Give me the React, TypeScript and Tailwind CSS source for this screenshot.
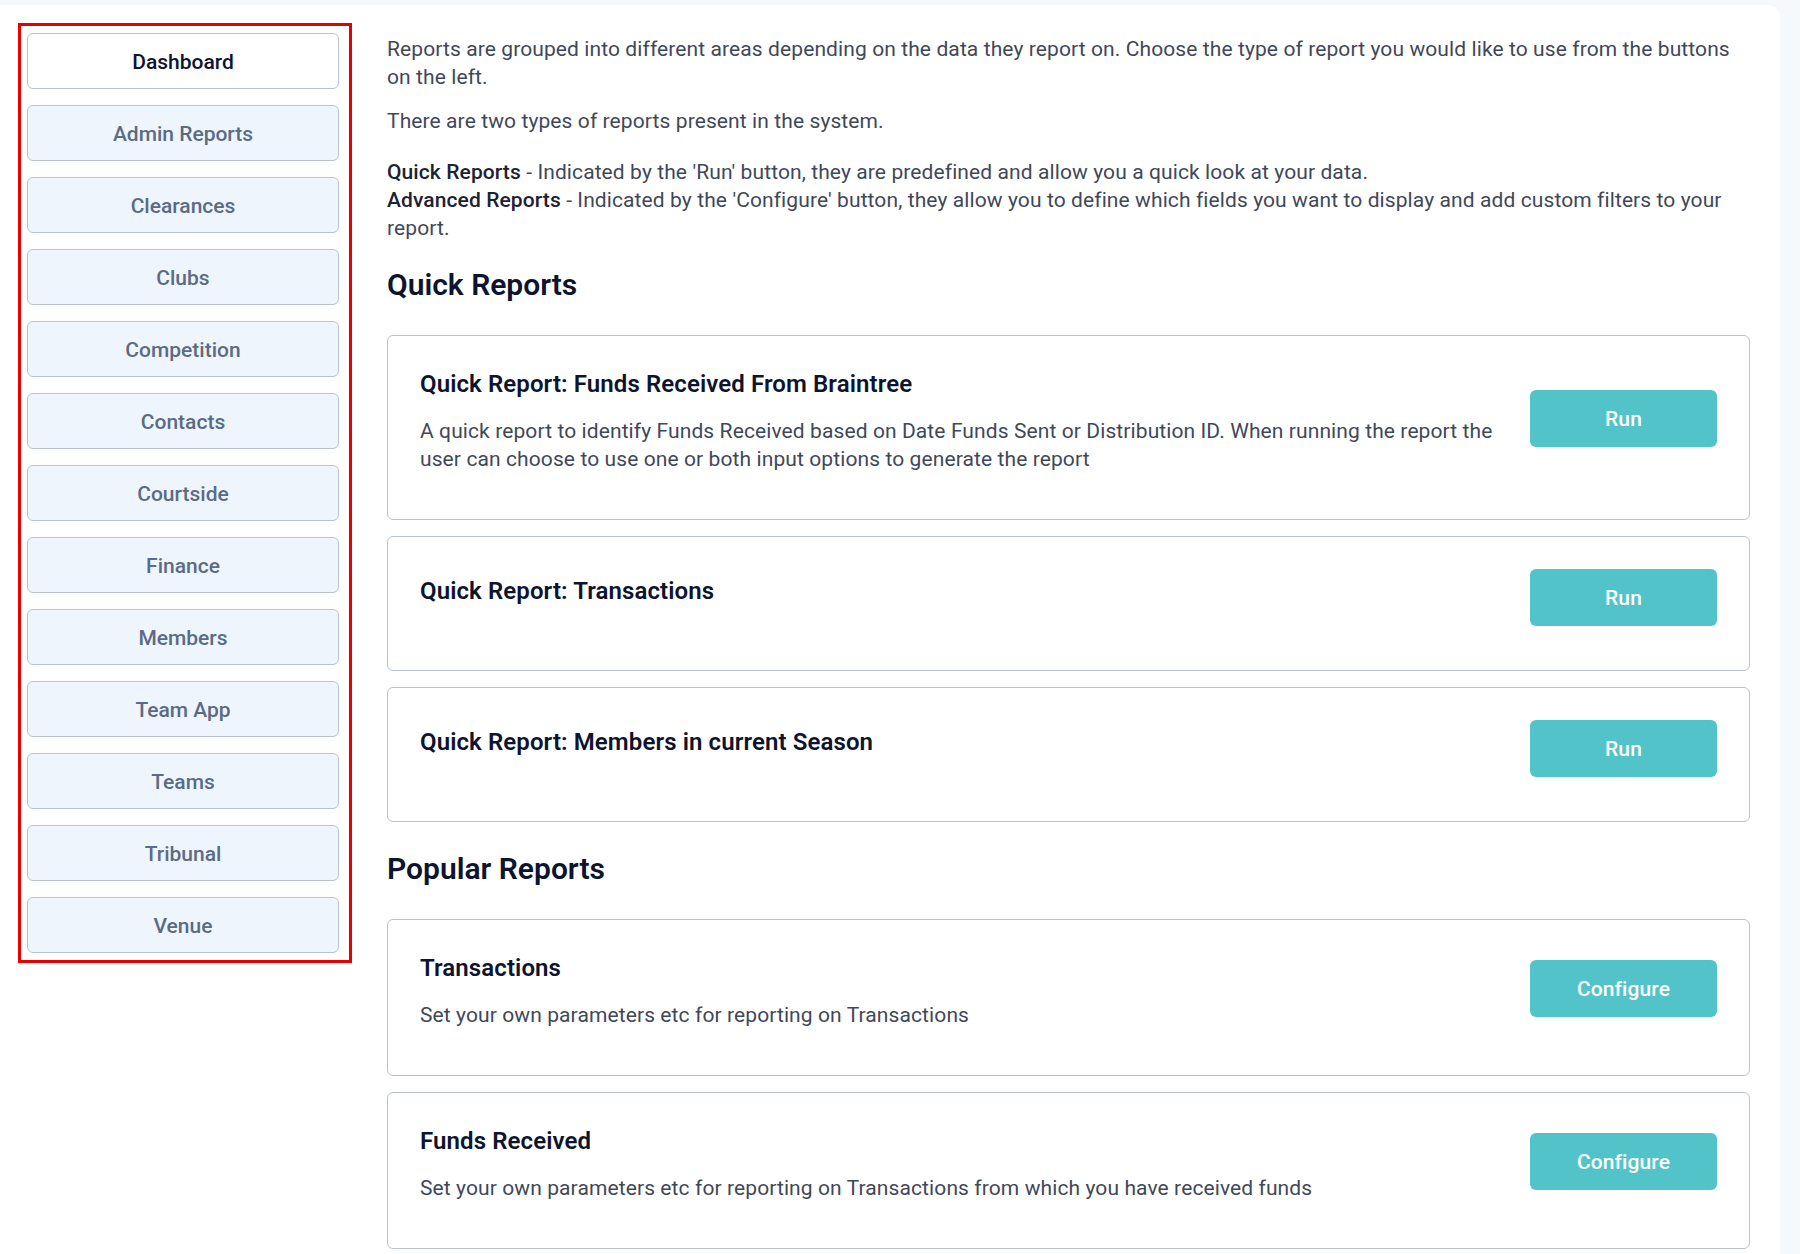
import React from "react";

const navItems = [
  "Dashboard",
  "Admin Reports",
  "Clearances",
  "Clubs",
  "Competition",
  "Contacts",
  "Courtside",
  "Finance",
  "Members",
  "Team App",
  "Teams",
  "Tribunal",
  "Venue",
];

type Report = { title: string; desc?: string; action: string };

const quickReports: Report[] = [
  {
    title: "Quick Report: Funds Received From Braintree",
    desc: "A quick report to identify Funds Received based on Date Funds Sent or Distribution ID. When running the report the user can choose to use one or both input options to generate the report",
    action: "Run",
  },
  { title: "Quick Report: Transactions", action: "Run" },
  { title: "Quick Report: Members in current Season", action: "Run" },
];

const popularReports: Report[] = [
  {
    title: "Transactions",
    desc: "Set your own parameters etc for reporting on Transactions",
    action: "Configure",
  },
  {
    title: "Funds Received",
    desc: "Set your own parameters etc for reporting on Transactions from which you have received funds",
    action: "Configure",
  },
];

function ReportCard({ r }: { r: Report }) {
  return (
    <div className="flex items-start gap-8 rounded-md border border-[#b9c3d0] bg-white px-8 py-8">
      <div className={r.desc ? "flex-1 pb-[14px]" : "flex-1 pt-[6px]"}>
        <h3 className="text-[24px] leading-8 font-semibold text-[#0d1430]">{r.title}</h3>
        {r.desc && (
          <p className="mt-[17px] text-[21px] leading-7 tracking-[0.1px] text-[#3f4859]">{r.desc}</p>
        )}
      </div>
      <button
        className={
          r.desc
            ? "mb-[18px] h-[57px] w-[187px] shrink-0 self-center rounded-md bg-[#52c4c9] text-[21px] font-medium text-white"
            : "mb-3 h-[57px] w-[187px] shrink-0 self-center rounded-md bg-[#52c4c9] text-[21px] font-medium text-white"
        }
      >
        {r.action}
      </button>
    </div>
  );
}

export default function App() {
  return (
    <div className="min-h-screen bg-[#f6f9fc] pt-[5px] font-[family-name:Roboto,sans-serif]">
      <div className="flex min-h-[1249px] w-[1780px] rounded-tr-xl bg-white pb-8">
        <aside className="ml-[18px] mt-[18px] w-[334px] shrink-0 self-start border-[3px] border-[#e60000] pb-[7px] pl-[6px] pr-[10px] pt-[7px]">
          <nav className="flex flex-col gap-4">
            {navItems.map((item, i) => (
              <button
                key={item}
                className={
                  i === 0
                    ? "h-14 rounded-md border border-[#b9c3d0] bg-white pt-1 text-[21px] font-medium text-[#0d1430]"
                    : "h-14 rounded-md border border-[#b9c3d0] bg-[#eef5fd] pt-1 text-[21px] font-medium text-[#5b6b84]"
                }
              >
                {item}
              </button>
            ))}
          </nav>
        </aside>
        <main className="ml-[35px] flex-1 pr-[30px] pt-[30px] text-[21px] leading-7 tracking-[0.1px] text-[#3f4859]">
          <p>
            Reports are grouped into different areas depending on the data they report on. Choose the type of
            report you would like to use from the buttons on the left.
          </p>
          <p className="mt-4">There are two types of reports present in the system.</p>
          <p className="mt-[23px]">
            <span className="font-medium text-[#1b2233]">Quick Reports</span> - Indicated by the 'Run' button, they
            are predefined and allow you a quick look at your data.
            <br />
            <span className="font-medium text-[#1b2233]">Advanced Reports</span> - Indicated by the 'Configure'
            button, they allow you to define which fields you want to display and add custom filters to your
            report.
          </p>
          <h2 className="mt-[25px] text-[30px] leading-9 font-semibold tracking-normal text-[#0d1430]">
            Quick Reports
          </h2>
          <div className="mt-8 flex flex-col gap-4">
            {quickReports.map((r) => (
              <ReportCard key={r.title} r={r} />
            ))}
          </div>
          <h2 className="mt-[29px] text-[30px] leading-9 font-semibold tracking-normal text-[#0d1430]">
            Popular Reports
          </h2>
          <div className="mt-8 flex flex-col gap-4">
            {popularReports.map((r) => (
              <ReportCard key={r.title} r={r} />
            ))}
          </div>
        </main>
      </div>
    </div>
  );
}
